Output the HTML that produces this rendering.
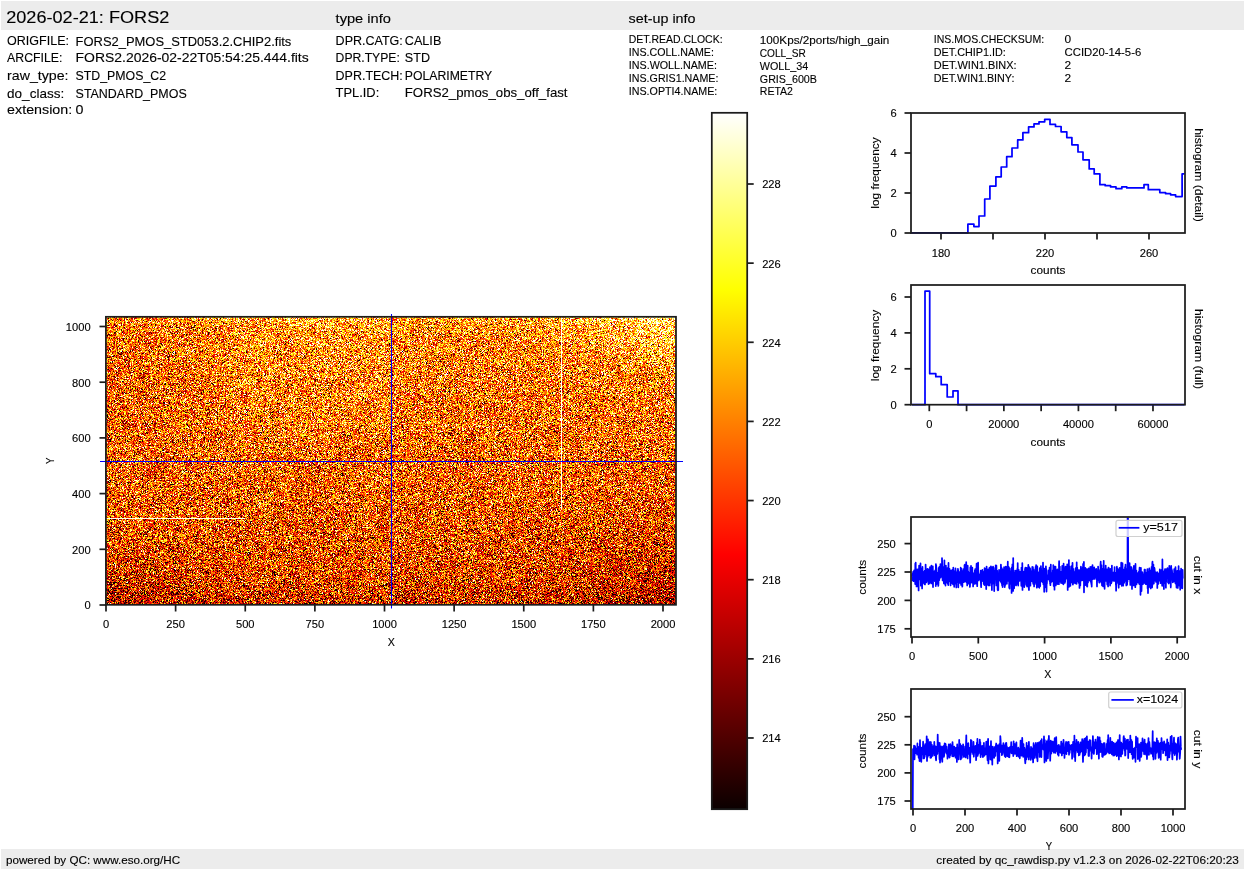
<!DOCTYPE html>
<html><head><meta charset="utf-8"><title>FORS2 raw display</title>
<style>
html,body{margin:0;padding:0;background:#fff;}
body{width:1245px;height:870px;position:relative;overflow:hidden;font-family:"Liberation Sans",sans-serif;}
#img{position:absolute;left:106px;top:317px;width:570px;height:288px;
background:linear-gradient(to bottom, rgb(242,160,53) 0%, rgb(237,140,39) 10%, rgb(231,125,31) 24%, rgb(228,118,28) 38%, rgb(219,104,22) 52%, rgb(217,99,19) 66%, rgb(209,87,14) 80%, rgb(201,75,11) 91%, rgb(186,60,8) 100%);}
#cbar{position:absolute;left:712px;top:113px;width:35px;height:696px;
background:linear-gradient(to top, rgb(11,0,0) 0%, rgb(255,0,0) 36.5079%, rgb(255,255,0) 74.6032%, rgb(255,255,255) 100%);}
svg{position:absolute;left:0;top:0;}
text{font-family:"Liberation Sans",sans-serif;fill:#000;stroke:#000;stroke-width:0.12px;}
</style></head><body>
<canvas id="img" width="570" height="288"></canvas>
<div id="cbar"></div>
<svg width="1245" height="870" viewBox="0 0 1245 870">
<line x1="100" y1="461.5" x2="683" y2="461.5" stroke="#0000ff" stroke-width="1.05"/>
<line x1="391.5" y1="314" x2="391.5" y2="608.5" stroke="#0000ff" stroke-width="1.05"/>
<rect x="105.9" y="316.8" width="570.1" height="288" fill="none" stroke="#1c1c1c" stroke-width="1.74"/>
<rect x="711.8" y="112.8" width="35.40000000000009" height="696.4000000000001" fill="none" stroke="#1c1c1c" stroke-width="1.74"/>
<rect x="1.00" y="1.00" width="1243.00" height="29.00" fill="#ececec" stroke="none" stroke-width="0"/>
<rect x="1.00" y="849.00" width="1243.00" height="20.00" fill="#ececec" stroke="none" stroke-width="0"/>
<text x="6.20" y="23.00" font-size="17.0" text-anchor="start" textLength="163.12" lengthAdjust="spacingAndGlyphs">2026-02-21: FORS2</text>
<text x="335.60" y="22.80" font-size="12.8" text-anchor="start" textLength="55.33" lengthAdjust="spacingAndGlyphs">type info</text>
<text x="628.60" y="22.50" font-size="12.8" text-anchor="start" textLength="66.89" lengthAdjust="spacingAndGlyphs">set-up info</text>
<text x="7.10" y="45.30" font-size="12.8" text-anchor="start" textLength="61.86" lengthAdjust="spacingAndGlyphs">ORIGFILE:</text>
<text x="75.60" y="46.10" font-size="12.8" text-anchor="start" textLength="215.73" lengthAdjust="spacingAndGlyphs">FORS2_PMOS_STD053.2.CHIP2.fits</text>
<text x="7.10" y="61.60" font-size="12.8" text-anchor="start" textLength="55.30" lengthAdjust="spacingAndGlyphs">ARCFILE:</text>
<text x="75.60" y="61.60" font-size="12.8" text-anchor="start" textLength="233.12" lengthAdjust="spacingAndGlyphs">FORS2.2026-02-22T05:54:25.444.fits</text>
<text x="7.10" y="79.60" font-size="12.8" text-anchor="start" textLength="61.41" lengthAdjust="spacingAndGlyphs">raw_type:</text>
<text x="75.60" y="80.10" font-size="12.8" text-anchor="start" textLength="90.48" lengthAdjust="spacingAndGlyphs">STD_PMOS_C2</text>
<text x="7.10" y="97.50" font-size="12.8" text-anchor="start" textLength="57.08" lengthAdjust="spacingAndGlyphs">do_class:</text>
<text x="75.60" y="97.50" font-size="12.8" text-anchor="start" textLength="111.11" lengthAdjust="spacingAndGlyphs">STANDARD_PMOS</text>
<text x="7.10" y="113.60" font-size="12.8" text-anchor="start" textLength="65.14" lengthAdjust="spacingAndGlyphs">extension:</text>
<text x="75.60" y="113.60" font-size="12.8" text-anchor="start" textLength="7.95" lengthAdjust="spacingAndGlyphs">0</text>
<text x="335.60" y="44.70" font-size="12.8" text-anchor="start" textLength="67.22" lengthAdjust="spacingAndGlyphs">DPR.CATG:</text>
<text x="404.80" y="44.70" font-size="12.8" text-anchor="start" textLength="36.52" lengthAdjust="spacingAndGlyphs">CALIB</text>
<text x="335.60" y="61.80" font-size="12.8" text-anchor="start" textLength="64.28" lengthAdjust="spacingAndGlyphs">DPR.TYPE:</text>
<text x="404.80" y="61.80" font-size="12.8" text-anchor="start" textLength="25.20" lengthAdjust="spacingAndGlyphs">STD</text>
<text x="335.60" y="79.60" font-size="12.8" text-anchor="start" textLength="67.25" lengthAdjust="spacingAndGlyphs">DPR.TECH:</text>
<text x="404.80" y="79.60" font-size="12.8" text-anchor="start" textLength="87.39" lengthAdjust="spacingAndGlyphs">POLARIMETRY</text>
<text x="335.60" y="96.90" font-size="12.8" text-anchor="start" textLength="43.64" lengthAdjust="spacingAndGlyphs">TPL.ID:</text>
<text x="404.80" y="96.90" font-size="12.8" text-anchor="start" textLength="162.70" lengthAdjust="spacingAndGlyphs">FORS2_pmos_obs_off_fast</text>
<text x="628.80" y="42.80" font-size="10.7" text-anchor="start" textLength="93.77" lengthAdjust="spacingAndGlyphs">DET.READ.CLOCK:</text>
<text x="759.80" y="44.40" font-size="10.7" text-anchor="start" textLength="129.47" lengthAdjust="spacingAndGlyphs">100Kps/2ports/high_gain</text>
<text x="628.80" y="55.60" font-size="10.7" text-anchor="start" textLength="85.09" lengthAdjust="spacingAndGlyphs">INS.COLL.NAME:</text>
<text x="759.80" y="56.70" font-size="10.7" text-anchor="start" textLength="46.09" lengthAdjust="spacingAndGlyphs">COLL_SR</text>
<text x="628.80" y="68.70" font-size="10.7" text-anchor="start" textLength="88.12" lengthAdjust="spacingAndGlyphs">INS.WOLL.NAME:</text>
<text x="759.80" y="69.80" font-size="10.7" text-anchor="start" textLength="48.53" lengthAdjust="spacingAndGlyphs">WOLL_34</text>
<text x="628.80" y="81.50" font-size="10.7" text-anchor="start" textLength="89.64" lengthAdjust="spacingAndGlyphs">INS.GRIS1.NAME:</text>
<text x="759.80" y="82.60" font-size="10.7" text-anchor="start" textLength="57.19" lengthAdjust="spacingAndGlyphs">GRIS_600B</text>
<text x="628.80" y="94.50" font-size="10.7" text-anchor="start" textLength="88.56" lengthAdjust="spacingAndGlyphs">INS.OPTI4.NAME:</text>
<text x="759.80" y="94.50" font-size="10.7" text-anchor="start" textLength="33.11" lengthAdjust="spacingAndGlyphs">RETA2</text>
<text x="933.80" y="42.70" font-size="10.7" text-anchor="start" textLength="110.33" lengthAdjust="spacingAndGlyphs">INS.MOS.CHECKSUM:</text>
<text x="1064.60" y="42.70" font-size="10.7" text-anchor="start" textLength="6.62" lengthAdjust="spacingAndGlyphs">0</text>
<text x="933.80" y="55.80" font-size="10.7" text-anchor="start" textLength="71.98" lengthAdjust="spacingAndGlyphs">DET.CHIP1.ID:</text>
<text x="1064.60" y="55.80" font-size="10.7" text-anchor="start" textLength="76.61" lengthAdjust="spacingAndGlyphs">CCID20-14-5-6</text>
<text x="933.80" y="68.80" font-size="10.7" text-anchor="start" textLength="82.72" lengthAdjust="spacingAndGlyphs">DET.WIN1.BINX:</text>
<text x="1064.60" y="68.80" font-size="10.7" text-anchor="start" textLength="6.62" lengthAdjust="spacingAndGlyphs">2</text>
<text x="933.80" y="81.50" font-size="10.7" text-anchor="start" textLength="80.58" lengthAdjust="spacingAndGlyphs">DET.WIN1.BINY:</text>
<text x="1064.60" y="81.50" font-size="10.7" text-anchor="start" textLength="6.62" lengthAdjust="spacingAndGlyphs">2</text>
<text x="6.00" y="863.60" font-size="10.7" text-anchor="start" textLength="174.06" lengthAdjust="spacingAndGlyphs">powered by QC: www.eso.org/HC</text>
<text x="1238.80" y="863.60" font-size="10.7" text-anchor="end" textLength="302.50" lengthAdjust="spacingAndGlyphs">created by qc_rawdisp.py v1.2.3 on 2026-02-22T06:20:23</text>
<line x1="106.00" y1="605.00" x2="106.00" y2="611.50" stroke="#1c1c1c" stroke-width="1.7"/>
<text x="106.00" y="628.20" font-size="10" text-anchor="middle" textLength="6.19" lengthAdjust="spacingAndGlyphs">0</text>
<line x1="175.62" y1="605.00" x2="175.62" y2="611.50" stroke="#1c1c1c" stroke-width="1.7"/>
<text x="175.62" y="628.20" font-size="10" text-anchor="middle" textLength="18.56" lengthAdjust="spacingAndGlyphs">250</text>
<line x1="245.25" y1="605.00" x2="245.25" y2="611.50" stroke="#1c1c1c" stroke-width="1.7"/>
<text x="245.25" y="628.20" font-size="10" text-anchor="middle" textLength="18.56" lengthAdjust="spacingAndGlyphs">500</text>
<line x1="314.88" y1="605.00" x2="314.88" y2="611.50" stroke="#1c1c1c" stroke-width="1.7"/>
<text x="314.88" y="628.20" font-size="10" text-anchor="middle" textLength="18.56" lengthAdjust="spacingAndGlyphs">750</text>
<line x1="384.50" y1="605.00" x2="384.50" y2="611.50" stroke="#1c1c1c" stroke-width="1.7"/>
<text x="384.50" y="628.20" font-size="10" text-anchor="middle" textLength="24.75" lengthAdjust="spacingAndGlyphs">1000</text>
<line x1="454.13" y1="605.00" x2="454.13" y2="611.50" stroke="#1c1c1c" stroke-width="1.7"/>
<text x="454.13" y="628.20" font-size="10" text-anchor="middle" textLength="24.75" lengthAdjust="spacingAndGlyphs">1250</text>
<line x1="523.75" y1="605.00" x2="523.75" y2="611.50" stroke="#1c1c1c" stroke-width="1.7"/>
<text x="523.75" y="628.20" font-size="10" text-anchor="middle" textLength="24.75" lengthAdjust="spacingAndGlyphs">1500</text>
<line x1="593.38" y1="605.00" x2="593.38" y2="611.50" stroke="#1c1c1c" stroke-width="1.7"/>
<text x="593.38" y="628.20" font-size="10" text-anchor="middle" textLength="24.75" lengthAdjust="spacingAndGlyphs">1750</text>
<line x1="663.00" y1="605.00" x2="663.00" y2="611.50" stroke="#1c1c1c" stroke-width="1.7"/>
<text x="663.00" y="628.20" font-size="10" text-anchor="middle" textLength="24.75" lengthAdjust="spacingAndGlyphs">2000</text>
<line x1="99.50" y1="605.00" x2="106.00" y2="605.00" stroke="#1c1c1c" stroke-width="1.7"/>
<text x="90.60" y="609.40" font-size="10" text-anchor="end" textLength="6.19" lengthAdjust="spacingAndGlyphs">0</text>
<line x1="99.50" y1="549.30" x2="106.00" y2="549.30" stroke="#1c1c1c" stroke-width="1.7"/>
<text x="90.60" y="553.70" font-size="10" text-anchor="end" textLength="18.56" lengthAdjust="spacingAndGlyphs">200</text>
<line x1="99.50" y1="493.60" x2="106.00" y2="493.60" stroke="#1c1c1c" stroke-width="1.7"/>
<text x="90.60" y="498.00" font-size="10" text-anchor="end" textLength="18.56" lengthAdjust="spacingAndGlyphs">400</text>
<line x1="99.50" y1="437.90" x2="106.00" y2="437.90" stroke="#1c1c1c" stroke-width="1.7"/>
<text x="90.60" y="442.30" font-size="10" text-anchor="end" textLength="18.56" lengthAdjust="spacingAndGlyphs">600</text>
<line x1="99.50" y1="382.20" x2="106.00" y2="382.20" stroke="#1c1c1c" stroke-width="1.7"/>
<text x="90.60" y="386.60" font-size="10" text-anchor="end" textLength="18.56" lengthAdjust="spacingAndGlyphs">800</text>
<line x1="99.50" y1="326.50" x2="106.00" y2="326.50" stroke="#1c1c1c" stroke-width="1.7"/>
<text x="90.60" y="330.90" font-size="10" text-anchor="end" textLength="24.75" lengthAdjust="spacingAndGlyphs">1000</text>
<text x="391.40" y="645.60" font-size="10.7" text-anchor="middle" textLength="7.12" lengthAdjust="spacingAndGlyphs">X</text>
<text x="54.00" y="460.80" font-size="10.7" text-anchor="middle" textLength="6.36" lengthAdjust="spacingAndGlyphs" transform="rotate(-90 54.00 460.80)">Y</text>
<line x1="747.20" y1="737.98" x2="753.70" y2="737.98" stroke="#1c1c1c" stroke-width="1.74"/>
<text x="762.20" y="742.38" font-size="10" text-anchor="start" textLength="18.56" lengthAdjust="spacingAndGlyphs">214</text>
<line x1="747.20" y1="658.84" x2="753.70" y2="658.84" stroke="#1c1c1c" stroke-width="1.74"/>
<text x="762.20" y="663.24" font-size="10" text-anchor="start" textLength="18.56" lengthAdjust="spacingAndGlyphs">216</text>
<line x1="747.20" y1="579.70" x2="753.70" y2="579.70" stroke="#1c1c1c" stroke-width="1.74"/>
<text x="762.20" y="584.10" font-size="10" text-anchor="start" textLength="18.56" lengthAdjust="spacingAndGlyphs">218</text>
<line x1="747.20" y1="500.56" x2="753.70" y2="500.56" stroke="#1c1c1c" stroke-width="1.74"/>
<text x="762.20" y="504.96" font-size="10" text-anchor="start" textLength="18.56" lengthAdjust="spacingAndGlyphs">220</text>
<line x1="747.20" y1="421.42" x2="753.70" y2="421.42" stroke="#1c1c1c" stroke-width="1.74"/>
<text x="762.20" y="425.82" font-size="10" text-anchor="start" textLength="18.56" lengthAdjust="spacingAndGlyphs">222</text>
<line x1="747.20" y1="342.28" x2="753.70" y2="342.28" stroke="#1c1c1c" stroke-width="1.74"/>
<text x="762.20" y="346.68" font-size="10" text-anchor="start" textLength="18.56" lengthAdjust="spacingAndGlyphs">224</text>
<line x1="747.20" y1="263.14" x2="753.70" y2="263.14" stroke="#1c1c1c" stroke-width="1.74"/>
<text x="762.20" y="267.54" font-size="10" text-anchor="start" textLength="18.56" lengthAdjust="spacingAndGlyphs">226</text>
<line x1="747.20" y1="184.00" x2="753.70" y2="184.00" stroke="#1c1c1c" stroke-width="1.74"/>
<text x="762.20" y="188.40" font-size="10" text-anchor="start" textLength="18.56" lengthAdjust="spacingAndGlyphs">228</text>
<line x1="904.50" y1="233.00" x2="911.00" y2="233.00" stroke="#1c1c1c" stroke-width="1.74"/>
<text x="896.80" y="237.40" font-size="10" text-anchor="end" textLength="6.19" lengthAdjust="spacingAndGlyphs">0</text>
<line x1="904.50" y1="193.00" x2="911.00" y2="193.00" stroke="#1c1c1c" stroke-width="1.74"/>
<text x="896.80" y="197.40" font-size="10" text-anchor="end" textLength="6.19" lengthAdjust="spacingAndGlyphs">2</text>
<line x1="904.50" y1="153.00" x2="911.00" y2="153.00" stroke="#1c1c1c" stroke-width="1.74"/>
<text x="896.80" y="157.40" font-size="10" text-anchor="end" textLength="6.19" lengthAdjust="spacingAndGlyphs">4</text>
<line x1="904.50" y1="113.00" x2="911.00" y2="113.00" stroke="#1c1c1c" stroke-width="1.74"/>
<text x="896.80" y="117.40" font-size="10" text-anchor="end" textLength="6.19" lengthAdjust="spacingAndGlyphs">6</text>
<line x1="941.00" y1="233.00" x2="941.00" y2="239.50" stroke="#1c1c1c" stroke-width="1.74"/>
<text x="941.00" y="257.00" font-size="10" text-anchor="middle" textLength="18.56" lengthAdjust="spacingAndGlyphs">180</text>
<line x1="993.00" y1="233.00" x2="993.00" y2="239.50" stroke="#1c1c1c" stroke-width="1.74"/>
<line x1="1045.00" y1="233.00" x2="1045.00" y2="239.50" stroke="#1c1c1c" stroke-width="1.74"/>
<text x="1045.00" y="257.00" font-size="10" text-anchor="middle" textLength="18.56" lengthAdjust="spacingAndGlyphs">220</text>
<line x1="1097.00" y1="233.00" x2="1097.00" y2="239.50" stroke="#1c1c1c" stroke-width="1.74"/>
<line x1="1149.00" y1="233.00" x2="1149.00" y2="239.50" stroke="#1c1c1c" stroke-width="1.74"/>
<text x="1149.00" y="257.00" font-size="10" text-anchor="middle" textLength="18.56" lengthAdjust="spacingAndGlyphs">260</text>
<text x="1048.00" y="273.90" font-size="10.7" text-anchor="middle" textLength="34.77" lengthAdjust="spacingAndGlyphs">counts</text>
<text x="878.60" y="173.00" font-size="10.7" text-anchor="middle" textLength="71.36" lengthAdjust="spacingAndGlyphs" transform="rotate(-90 878.60 173.00)">log frequency</text>
<text x="1194.60" y="175.00" font-size="10.7" text-anchor="middle" textLength="93.44" lengthAdjust="spacingAndGlyphs" transform="rotate(90 1194.60 175.00)">histogram (detail)</text>
<path d="M911,232.8 H967.9 V224.2 H973.9 V226.6 H979 V216 H984.7 V199 H989.9 V186.1 H995.9 V176.8 H1001.2 V167 H1006.7 V156.7 H1012 V148 H1017.7 V139.9 H1022.9 V132.7 H1028.6 V126.9 H1034 V123.9 H1039 V121.8 H1044.7 V119.3 H1050 V124.4 H1055.5 V126.5 H1061.1 V131.8 H1066.8 V137.6 H1071.9 V144.8 H1078 V152 H1083 V159.8 H1089.2 V168.9 H1094.2 V173.9 H1099.9 V184.7 H1105.2 V185.7 H1110.6 V186.9 H1116 V188.7 H1121.8 V186.9 H1126.8 V187.9 H1144 V184.7 H1148.3 V189.7 H1159.8 V192.6 H1165.6 V193.7 H1170.6 V194.8 H1175.6 V196.6 H1182.1 V173.9 H1184.5" fill="none" stroke="#00f" stroke-width="1.74" stroke-linejoin="round"/>
<rect x="911.00" y="113.00" width="274.00" height="120.00" fill="none" stroke="#1c1c1c" stroke-width="1.74"/>
<line x1="904.50" y1="404.70" x2="911.00" y2="404.70" stroke="#1c1c1c" stroke-width="1.74"/>
<text x="896.80" y="409.10" font-size="10" text-anchor="end" textLength="6.19" lengthAdjust="spacingAndGlyphs">0</text>
<line x1="904.50" y1="368.80" x2="911.00" y2="368.80" stroke="#1c1c1c" stroke-width="1.74"/>
<text x="896.80" y="373.20" font-size="10" text-anchor="end" textLength="6.19" lengthAdjust="spacingAndGlyphs">2</text>
<line x1="904.50" y1="332.90" x2="911.00" y2="332.90" stroke="#1c1c1c" stroke-width="1.74"/>
<text x="896.80" y="337.30" font-size="10" text-anchor="end" textLength="6.19" lengthAdjust="spacingAndGlyphs">4</text>
<line x1="904.50" y1="297.00" x2="911.00" y2="297.00" stroke="#1c1c1c" stroke-width="1.74"/>
<text x="896.80" y="301.40" font-size="10" text-anchor="end" textLength="6.19" lengthAdjust="spacingAndGlyphs">6</text>
<line x1="929.30" y1="404.70" x2="929.30" y2="411.20" stroke="#1c1c1c" stroke-width="1.74"/>
<text x="929.30" y="428.00" font-size="10" text-anchor="middle" textLength="6.19" lengthAdjust="spacingAndGlyphs">0</text>
<line x1="966.58" y1="404.70" x2="966.58" y2="411.20" stroke="#1c1c1c" stroke-width="1.74"/>
<line x1="1003.86" y1="404.70" x2="1003.86" y2="411.20" stroke="#1c1c1c" stroke-width="1.74"/>
<text x="1003.86" y="428.00" font-size="10" text-anchor="middle" textLength="30.94" lengthAdjust="spacingAndGlyphs">20000</text>
<line x1="1041.14" y1="404.70" x2="1041.14" y2="411.20" stroke="#1c1c1c" stroke-width="1.74"/>
<line x1="1078.42" y1="404.70" x2="1078.42" y2="411.20" stroke="#1c1c1c" stroke-width="1.74"/>
<text x="1078.42" y="428.00" font-size="10" text-anchor="middle" textLength="30.94" lengthAdjust="spacingAndGlyphs">40000</text>
<line x1="1115.70" y1="404.70" x2="1115.70" y2="411.20" stroke="#1c1c1c" stroke-width="1.74"/>
<line x1="1152.98" y1="404.70" x2="1152.98" y2="411.20" stroke="#1c1c1c" stroke-width="1.74"/>
<text x="1152.98" y="428.00" font-size="10" text-anchor="middle" textLength="30.94" lengthAdjust="spacingAndGlyphs">60000</text>
<text x="1048.00" y="445.80" font-size="10.7" text-anchor="middle" textLength="34.77" lengthAdjust="spacingAndGlyphs">counts</text>
<text x="878.60" y="345.50" font-size="10.7" text-anchor="middle" textLength="71.36" lengthAdjust="spacingAndGlyphs" transform="rotate(-90 878.60 345.50)">log frequency</text>
<text x="1194.60" y="349.00" font-size="10.7" text-anchor="middle" textLength="80.22" lengthAdjust="spacingAndGlyphs" transform="rotate(90 1194.60 349.00)">histogram (full)</text>
<path d="M912,404.7 H925 V291.2 H929.7 V373.7 H935.8 V376.7 H941.2 V384.7 H947.2 V397 H953 V390.8 H958 V404.7 H1184.5" fill="none" stroke="#00f" stroke-width="1.74" stroke-linejoin="round"/>
<rect x="911.00" y="285.00" width="274.00" height="119.70" fill="none" stroke="#1c1c1c" stroke-width="1.74"/>
<line x1="904.50" y1="628.80" x2="911.00" y2="628.80" stroke="#1c1c1c" stroke-width="1.74"/>
<text x="895.80" y="633.20" font-size="10" text-anchor="end" textLength="18.56" lengthAdjust="spacingAndGlyphs">175</text>
<line x1="904.50" y1="600.40" x2="911.00" y2="600.40" stroke="#1c1c1c" stroke-width="1.74"/>
<text x="895.80" y="604.80" font-size="10" text-anchor="end" textLength="18.56" lengthAdjust="spacingAndGlyphs">200</text>
<line x1="904.50" y1="572.00" x2="911.00" y2="572.00" stroke="#1c1c1c" stroke-width="1.74"/>
<text x="895.80" y="576.40" font-size="10" text-anchor="end" textLength="18.56" lengthAdjust="spacingAndGlyphs">225</text>
<line x1="904.50" y1="543.60" x2="911.00" y2="543.60" stroke="#1c1c1c" stroke-width="1.74"/>
<text x="895.80" y="548.00" font-size="10" text-anchor="end" textLength="18.56" lengthAdjust="spacingAndGlyphs">250</text>
<line x1="912.00" y1="637.00" x2="912.00" y2="643.50" stroke="#1c1c1c" stroke-width="1.74"/>
<text x="912.00" y="660.20" font-size="10" text-anchor="middle" textLength="6.19" lengthAdjust="spacingAndGlyphs">0</text>
<line x1="978.30" y1="637.00" x2="978.30" y2="643.50" stroke="#1c1c1c" stroke-width="1.74"/>
<text x="978.30" y="660.20" font-size="10" text-anchor="middle" textLength="18.56" lengthAdjust="spacingAndGlyphs">500</text>
<line x1="1044.60" y1="637.00" x2="1044.60" y2="643.50" stroke="#1c1c1c" stroke-width="1.74"/>
<text x="1044.60" y="660.20" font-size="10" text-anchor="middle" textLength="24.75" lengthAdjust="spacingAndGlyphs">1000</text>
<line x1="1110.90" y1="637.00" x2="1110.90" y2="643.50" stroke="#1c1c1c" stroke-width="1.74"/>
<text x="1110.90" y="660.20" font-size="10" text-anchor="middle" textLength="24.75" lengthAdjust="spacingAndGlyphs">1500</text>
<line x1="1177.20" y1="637.00" x2="1177.20" y2="643.50" stroke="#1c1c1c" stroke-width="1.74"/>
<text x="1177.20" y="660.20" font-size="10" text-anchor="middle" textLength="24.75" lengthAdjust="spacingAndGlyphs">2000</text>
<text x="1047.70" y="678.00" font-size="10.7" text-anchor="middle" textLength="7.12" lengthAdjust="spacingAndGlyphs">X</text>
<text x="866.40" y="577.30" font-size="10.7" text-anchor="middle" textLength="34.77" lengthAdjust="spacingAndGlyphs" transform="rotate(-90 866.40 577.30)">counts</text>
<text x="1194.40" y="575.00" font-size="10.7" text-anchor="middle" textLength="38.66" lengthAdjust="spacingAndGlyphs" transform="rotate(90 1194.40 575.00)">cut in x</text>
<clipPath id="c1"><rect x="911" y="517" width="274" height="120"/></clipPath>
<path d="M912.0,576.9 912.1,575.8 912.3,574.0 912.4,580.5 912.5,578.7 912.7,573.5 912.8,579.3 912.9,577.6 913.1,571.9 913.2,571.9 913.3,579.5 913.5,577.5 913.6,581.2 913.7,577.9 913.9,573.8 914.0,576.9 914.1,570.4 914.2,577.0 914.4,579.4 914.5,576.3 914.6,576.9 914.8,579.8 914.9,576.9 915.0,575.2 915.2,584.1 915.3,563.6 915.4,566.9 915.6,577.4 915.7,562.7 915.8,575.9 916.0,569.5 916.1,583.3 916.2,575.1 916.4,573.9 916.5,586.4 916.6,570.2 916.8,584.4 916.9,580.6 917.0,575.4 917.2,569.3 917.3,578.9 917.4,586.5 917.6,574.8 917.7,580.1 917.8,573.4 918.0,579.0 918.1,573.9 918.2,583.1 918.4,573.2 918.5,569.2 918.6,590.4 918.7,577.8 918.9,572.9 919.0,575.3 919.1,565.5 919.3,577.3 919.4,573.8 919.5,572.9 919.7,579.4 919.8,577.0 919.9,577.0 920.1,574.6 920.2,576.8 920.3,578.4 920.5,563.4 920.6,576.6 920.7,573.8 920.9,585.7 921.0,582.0 921.1,569.9 921.3,575.7 921.4,582.7 921.5,568.8 921.7,573.2 921.8,579.8 921.9,569.3 922.1,588.5 922.2,569.5 922.3,573.3 922.5,566.9 922.6,578.5 922.7,583.1 922.8,573.2 923.0,574.6 923.1,572.2 923.2,577.0 923.4,573.8 923.5,572.2 923.6,582.9 923.8,577.8 923.9,575.7 924.0,576.2 924.2,579.8 924.3,576.1 924.4,584.1 924.6,582.6 924.7,570.7 924.8,572.4 925.0,584.5 925.1,570.6 925.2,570.5 925.4,577.9 925.5,575.7 925.6,564.6 925.8,571.2 925.9,575.3 926.0,579.0 926.2,574.0 926.3,579.1 926.4,582.4 926.6,576.2 926.7,570.3 926.8,578.0 926.9,580.9 927.1,570.5 927.2,573.6 927.3,573.5 927.5,568.8 927.6,575.3 927.7,573.3 927.9,572.2 928.0,579.3 928.1,578.1 928.3,569.4 928.4,579.2 928.5,584.1 928.7,574.9 928.8,580.4 928.9,581.0 929.1,573.8 929.2,583.6 929.3,577.0 929.5,577.7 929.6,577.8 929.7,582.4 929.9,569.7 930.0,567.0 930.1,574.1 930.3,578.5 930.4,581.5 930.5,580.4 930.7,574.8 930.8,576.7 930.9,582.7 931.1,576.3 931.2,574.8 931.3,583.4 931.4,565.6 931.6,579.8 931.7,583.3 931.8,574.9 932.0,576.8 932.1,579.1 932.2,578.4 932.4,579.1 932.5,574.0 932.6,583.3 932.8,566.3 932.9,577.9 933.0,587.1 933.2,571.9 933.3,574.0 933.4,575.9 933.6,577.8 933.7,575.3 933.8,574.0 934.0,574.5 934.1,580.0 934.2,577.0 934.4,575.8 934.5,571.0 934.6,571.7 934.8,574.9 934.9,581.2 935.0,576.9 935.2,574.7 935.3,573.6 935.4,574.3 935.5,574.2 935.7,569.1 935.8,586.1 935.9,564.1 936.1,578.6 936.2,565.3 936.3,570.4 936.5,572.4 936.6,584.1 936.7,578.7 936.9,582.0 937.0,572.5 937.1,575.6 937.3,579.4 937.4,583.6 937.5,577.7 937.7,575.5 937.8,579.5 937.9,577.3 938.1,575.6 938.2,582.2 938.3,586.0 938.5,582.5 938.6,567.9 938.7,576.8 938.9,577.1 939.0,577.9 939.1,575.9 939.3,580.1 939.4,566.8 939.5,571.0 939.7,571.0 939.8,573.6 939.9,575.2 940.0,573.8 940.2,577.0 940.3,570.0 940.4,564.2 940.6,577.6 940.7,572.5 940.8,570.7 941.0,572.4 941.1,572.5 941.2,574.8 941.4,574.6 941.5,567.0 941.6,572.2 941.8,569.8 941.9,575.3 942.0,558.1 942.2,563.3 942.3,577.0 942.4,570.4 942.6,580.4 942.7,568.8 942.8,579.6 943.0,571.2 943.1,568.4 943.2,575.6 943.4,577.0 943.5,572.8 943.6,566.8 943.8,575.4 943.9,583.4 944.0,573.0 944.1,573.1 944.3,574.8 944.4,560.3 944.5,575.4 944.7,570.8 944.8,579.3 944.9,584.0 945.1,583.8 945.2,579.3 945.3,567.9 945.5,585.6 945.6,575.1 945.7,575.3 945.9,565.5 946.0,582.6 946.1,580.1 946.3,572.0 946.4,578.6 946.5,581.7 946.7,572.9 946.8,573.4 946.9,578.6 947.1,569.3 947.2,571.8 947.3,568.1 947.5,570.7 947.6,577.3 947.7,583.5 947.9,579.7 948.0,573.8 948.1,583.8 948.3,585.2 948.4,577.1 948.5,562.9 948.6,574.2 948.8,569.2 948.9,581.4 949.0,573.8 949.2,568.6 949.3,570.6 949.4,575.2 949.6,574.6 949.7,569.1 949.8,576.2 950.0,573.7 950.1,575.0 950.2,580.4 950.4,577.2 950.5,576.6 950.6,585.4 950.8,580.1 950.9,575.1 951.0,581.1 951.2,570.8 951.3,570.6 951.4,577.8 951.6,571.8 951.7,574.8 951.8,570.7 952.0,578.6 952.1,581.4 952.2,581.8 952.4,583.5 952.5,573.5 952.6,583.1 952.7,569.5 952.9,576.6 953.0,584.3 953.1,578.1 953.3,567.5 953.4,577.8 953.5,573.3 953.7,577.9 953.8,584.0 953.9,572.0 954.1,577.4 954.2,586.8 954.3,576.7 954.5,571.3 954.6,581.0 954.7,573.2 954.9,571.5 955.0,573.1 955.1,582.0 955.3,583.5 955.4,575.2 955.5,568.4 955.7,576.2 955.8,579.5 955.9,572.9 956.1,575.9 956.2,581.6 956.3,587.5 956.5,579.9 956.6,573.0 956.7,579.7 956.8,579.8 957.0,572.1 957.1,575.2 957.2,581.3 957.4,579.9 957.5,579.4 957.6,571.6 957.8,569.9 957.9,568.8 958.0,582.3 958.2,570.0 958.3,587.3 958.4,581.2 958.6,575.3 958.7,579.1 958.8,577.0 959.0,575.9 959.1,576.1 959.2,580.3 959.4,572.2 959.5,576.8 959.6,582.8 959.8,576.5 959.9,572.6 960.0,583.0 960.2,572.5 960.3,579.6 960.4,573.2 960.6,574.1 960.7,567.7 960.8,573.7 961.0,579.9 961.1,585.0 961.2,575.6 961.3,579.1 961.5,568.5 961.6,572.9 961.7,571.1 961.9,576.2 962.0,583.2 962.1,580.5 962.3,586.6 962.4,585.4 962.5,571.4 962.7,577.0 962.8,576.7 962.9,575.1 963.1,571.8 963.2,572.0 963.3,578.8 963.5,579.4 963.6,569.2 963.7,571.2 963.9,579.3 964.0,582.1 964.1,573.8 964.3,573.3 964.4,577.5 964.5,565.2 964.7,574.6 964.8,577.0 964.9,564.6 965.1,581.1 965.2,575.1 965.3,580.2 965.4,566.1 965.6,578.3 965.7,575.2 965.8,575.0 966.0,581.6 966.1,571.0 966.2,562.2 966.4,574.0 966.5,579.4 966.6,582.3 966.8,578.9 966.9,576.1 967.0,576.3 967.2,585.5 967.3,566.0 967.4,574.8 967.6,584.3 967.7,565.7 967.8,578.3 968.0,572.9 968.1,574.5 968.2,571.4 968.4,573.1 968.5,574.7 968.6,583.3 968.8,575.0 968.9,579.0 969.0,577.3 969.2,573.0 969.3,575.7 969.4,573.7 969.6,578.0 969.7,579.1 969.8,582.8 969.9,587.0 970.1,584.1 970.2,576.5 970.3,567.4 970.5,581.6 970.6,576.8 970.7,579.3 970.9,574.0 971.0,565.9 971.1,568.6 971.3,578.4 971.4,578.9 971.5,575.0 971.7,579.6 971.8,580.2 971.9,582.6 972.1,574.5 972.2,581.8 972.3,567.5 972.5,578.7 972.6,578.9 972.7,575.3 972.9,576.4 973.0,573.2 973.1,586.4 973.3,577.6 973.4,576.6 973.5,584.3 973.7,580.3 973.8,574.2 973.9,573.4 974.0,584.2 974.2,580.0 974.3,582.4 974.4,574.3 974.6,583.5 974.7,576.7 974.8,570.7 975.0,577.9 975.1,571.8 975.2,569.0 975.4,581.5 975.5,580.9 975.6,580.3 975.8,578.9 975.9,576.0 976.0,583.7 976.2,575.0 976.3,580.2 976.4,570.7 976.6,563.7 976.7,576.3 976.8,564.1 977.0,569.8 977.1,573.3 977.2,586.2 977.4,574.9 977.5,579.9 977.6,570.7 977.8,570.2 977.9,575.0 978.0,578.5 978.1,562.5 978.3,575.0 978.4,572.5 978.5,578.6 978.7,573.9 978.8,580.4 978.9,575.7 979.1,577.0 979.2,579.4 979.3,578.8 979.5,577.0 979.6,577.2 979.7,577.8 979.9,578.3 980.0,578.2 980.1,575.5 980.3,578.7 980.4,574.0 980.5,579.2 980.7,570.6 980.8,580.6 980.9,583.0 981.1,587.2 981.2,577.8 981.3,578.9 981.5,574.5 981.6,578.3 981.7,581.1 981.9,571.0 982.0,578.5 982.1,571.0 982.3,575.8 982.4,569.9 982.5,577.8 982.6,573.8 982.8,581.1 982.9,578.0 983.0,577.6 983.2,575.4 983.3,573.7 983.4,580.3 983.6,573.3 983.7,583.9 983.8,579.1 984.0,575.9 984.1,571.7 984.2,573.3 984.4,575.8 984.5,585.1 984.6,568.0 984.8,574.0 984.9,570.8 985.0,568.7 985.2,575.6 985.3,580.7 985.4,573.8 985.6,579.7 985.7,573.3 985.8,579.2 986.0,574.2 986.1,579.3 986.2,589.1 986.4,571.7 986.5,579.2 986.6,566.5 986.7,575.5 986.9,583.1 987.0,574.5 987.1,582.0 987.3,584.8 987.4,582.2 987.5,576.9 987.7,575.1 987.8,575.0 987.9,574.5 988.1,573.4 988.2,569.4 988.3,578.9 988.5,571.3 988.6,575.4 988.7,585.4 988.9,570.5 989.0,582.3 989.1,572.5 989.3,576.6 989.4,571.2 989.5,567.5 989.7,571.4 989.8,585.4 989.9,575.6 990.1,578.4 990.2,577.3 990.3,576.8 990.5,571.2 990.6,575.1 990.7,581.3 990.9,566.3 991.0,578.4 991.1,578.7 991.2,582.7 991.4,578.0 991.5,581.0 991.6,567.2 991.8,569.5 991.9,590.1 992.0,572.6 992.2,577.0 992.3,583.6 992.4,584.0 992.6,572.4 992.7,575.9 992.8,570.9 993.0,580.6 993.1,566.7 993.2,573.8 993.4,577.0 993.5,571.0 993.6,575.4 993.8,578.7 993.9,581.8 994.0,575.3 994.2,591.1 994.3,580.4 994.4,583.5 994.6,571.5 994.7,570.3 994.8,578.8 995.0,578.9 995.1,567.8 995.2,574.8 995.3,568.0 995.5,576.5 995.6,572.7 995.7,565.3 995.9,578.3 996.0,571.5 996.1,572.3 996.3,585.5 996.4,565.5 996.5,581.2 996.7,572.1 996.8,576.1 996.9,579.8 997.1,578.3 997.2,570.7 997.3,583.7 997.5,575.7 997.6,589.8 997.7,580.0 997.9,590.3 998.0,579.2 998.1,575.6 998.3,590.0 998.4,577.6 998.5,580.0 998.7,579.5 998.8,573.7 998.9,574.4 999.1,569.8 999.2,570.0 999.3,579.1 999.5,570.9 999.6,571.2 999.7,577.0 999.8,579.2 1000.0,580.5 1000.1,580.7 1000.2,572.3 1000.4,578.9 1000.5,575.2 1000.6,580.8 1000.8,581.8 1000.9,564.5 1001.0,566.3 1001.2,571.7 1001.3,576.6 1001.4,581.5 1001.6,567.9 1001.7,583.5 1001.8,576.5 1002.0,575.3 1002.1,585.6 1002.2,576.8 1002.4,569.7 1002.5,571.8 1002.6,587.1 1002.8,569.4 1002.9,583.8 1003.0,576.9 1003.2,577.3 1003.3,582.1 1003.4,569.5 1003.6,576.1 1003.7,574.2 1003.8,584.3 1003.9,581.6 1004.1,567.0 1004.2,576.4 1004.3,577.6 1004.5,575.7 1004.6,581.3 1004.7,587.1 1004.9,583.5 1005.0,577.0 1005.1,572.0 1005.3,573.5 1005.4,584.8 1005.5,581.8 1005.7,581.0 1005.8,566.6 1005.9,582.3 1006.1,580.0 1006.2,573.5 1006.3,567.9 1006.5,572.3 1006.6,571.7 1006.7,567.6 1006.9,583.7 1007.0,572.7 1007.1,577.5 1007.3,570.9 1007.4,579.8 1007.5,570.0 1007.7,565.8 1007.8,561.7 1007.9,580.9 1008.0,578.8 1008.2,573.1 1008.3,568.2 1008.4,580.3 1008.6,568.0 1008.7,580.3 1008.8,567.1 1009.0,577.1 1009.1,570.7 1009.2,587.8 1009.4,587.7 1009.5,570.8 1009.6,588.6 1009.8,568.7 1009.9,584.0 1010.0,578.3 1010.2,571.0 1010.3,575.9 1010.4,576.3 1010.6,575.3 1010.7,577.9 1010.8,572.2 1011.0,572.8 1011.1,573.4 1011.2,573.7 1011.4,579.2 1011.5,581.7 1011.6,593.0 1011.8,567.3 1011.9,575.7 1012.0,573.8 1012.2,573.5 1012.3,580.7 1012.4,564.3 1012.5,574.4 1012.7,578.0 1012.8,575.6 1012.9,578.5 1013.1,591.0 1013.2,558.0 1013.3,574.2 1013.5,578.1 1013.6,581.6 1013.7,578.6 1013.9,581.3 1014.0,586.2 1014.1,588.5 1014.3,580.9 1014.4,573.5 1014.5,578.3 1014.7,572.7 1014.8,574.9 1014.9,584.9 1015.1,576.6 1015.2,570.6 1015.3,583.5 1015.5,580.6 1015.6,582.6 1015.7,579.5 1015.9,580.9 1016.0,581.8 1016.1,585.4 1016.3,570.6 1016.4,583.3 1016.5,577.2 1016.6,578.2 1016.8,579.2 1016.9,570.7 1017.0,577.5 1017.2,572.7 1017.3,583.8 1017.4,568.6 1017.6,577.6 1017.7,563.0 1017.8,570.3 1018.0,576.0 1018.1,577.9 1018.2,585.6 1018.4,573.4 1018.5,576.0 1018.6,569.6 1018.8,573.0 1018.9,571.5 1019.0,573.0 1019.2,576.7 1019.3,573.6 1019.4,580.5 1019.6,571.9 1019.7,580.8 1019.8,578.7 1020.0,571.6 1020.1,574.1 1020.2,576.4 1020.4,576.7 1020.5,577.3 1020.6,576.4 1020.8,573.7 1020.9,579.0 1021.0,578.6 1021.1,576.7 1021.3,585.8 1021.4,579.2 1021.5,567.6 1021.7,581.3 1021.8,575.6 1021.9,576.6 1022.1,575.6 1022.2,577.9 1022.3,563.1 1022.5,590.0 1022.6,577.8 1022.7,583.8 1022.9,576.5 1023.0,578.6 1023.1,574.6 1023.3,578.0 1023.4,575.9 1023.5,571.7 1023.7,578.4 1023.8,581.5 1023.9,581.3 1024.1,571.8 1024.2,576.0 1024.3,587.1 1024.5,573.6 1024.6,580.0 1024.7,573.8 1024.9,575.4 1025.0,569.2 1025.1,570.0 1025.2,568.0 1025.4,571.4 1025.5,567.5 1025.6,576.1 1025.8,576.1 1025.9,568.0 1026.0,575.7 1026.2,584.5 1026.3,575.2 1026.4,575.7 1026.6,585.4 1026.7,567.9 1026.8,580.5 1027.0,575.2 1027.1,586.6 1027.2,574.3 1027.4,575.4 1027.5,573.4 1027.6,571.0 1027.8,579.1 1027.9,580.8 1028.0,574.5 1028.2,575.8 1028.3,564.9 1028.4,574.8 1028.6,580.3 1028.7,578.2 1028.8,588.8 1029.0,590.1 1029.1,568.3 1029.2,567.1 1029.4,570.4 1029.5,573.6 1029.6,579.7 1029.7,577.0 1029.9,571.7 1030.0,569.4 1030.1,568.4 1030.3,579.4 1030.4,585.7 1030.5,579.0 1030.7,579.6 1030.8,572.5 1030.9,573.9 1031.1,575.9 1031.2,577.3 1031.3,581.1 1031.5,577.2 1031.6,577.4 1031.7,571.2 1031.9,579.1 1032.0,578.1 1032.1,570.2 1032.3,566.9 1032.4,576.1 1032.5,581.6 1032.7,576.1 1032.8,568.7 1032.9,567.1 1033.1,580.3 1033.2,583.8 1033.3,573.4 1033.5,581.9 1033.6,569.3 1033.7,577.5 1033.8,576.4 1034.0,581.5 1034.1,586.4 1034.2,579.5 1034.4,575.9 1034.5,577.4 1034.6,572.7 1034.8,571.2 1034.9,584.0 1035.0,577.6 1035.2,571.6 1035.3,571.9 1035.4,571.8 1035.6,566.8 1035.7,577.6 1035.8,574.2 1036.0,577.1 1036.1,565.0 1036.2,581.9 1036.4,575.1 1036.5,579.0 1036.6,565.5 1036.8,587.7 1036.9,576.6 1037.0,583.0 1037.2,582.6 1037.3,566.5 1037.4,580.3 1037.6,579.1 1037.7,575.3 1037.8,575.7 1037.9,577.6 1038.1,580.7 1038.2,572.9 1038.3,572.6 1038.5,586.9 1038.6,573.6 1038.7,579.1 1038.9,575.7 1039.0,572.2 1039.1,583.7 1039.3,587.8 1039.4,579.7 1039.5,580.9 1039.7,573.1 1039.8,568.0 1039.9,573.2 1040.1,586.2 1040.2,585.8 1040.3,570.3 1040.5,575.9 1040.6,581.6 1040.7,573.9 1040.9,566.2 1041.0,573.4 1041.1,568.4 1041.3,574.0 1041.4,578.5 1041.5,570.7 1041.7,574.2 1041.8,579.5 1041.9,580.7 1042.1,576.5 1042.2,581.7 1042.3,580.7 1042.4,577.5 1042.6,578.4 1042.7,581.8 1042.8,582.4 1043.0,562.6 1043.1,570.0 1043.2,570.2 1043.4,584.3 1043.5,574.7 1043.6,582.7 1043.8,573.4 1043.9,577.9 1044.0,576.8 1044.2,591.8 1044.3,568.6 1044.4,573.0 1044.6,573.1 1044.7,576.7 1044.8,587.5 1045.0,580.6 1045.1,576.5 1045.2,572.3 1045.4,578.2 1045.5,586.1 1045.6,568.5 1045.8,579.2 1045.9,566.3 1046.0,572.7 1046.2,577.8 1046.3,569.1 1046.4,579.1 1046.5,591.6 1046.7,579.2 1046.8,577.2 1046.9,583.4 1047.1,576.7 1047.2,576.2 1047.3,579.9 1047.5,577.9 1047.6,576.8 1047.7,575.0 1047.9,576.3 1048.0,579.6 1048.1,577.1 1048.3,577.1 1048.4,570.5 1048.5,576.3 1048.7,571.8 1048.8,578.6 1048.9,570.0 1049.1,572.5 1049.2,577.3 1049.3,575.4 1049.5,574.7 1049.6,567.6 1049.7,581.2 1049.9,574.6 1050.0,579.0 1050.1,584.1 1050.3,573.2 1050.4,585.2 1050.5,578.0 1050.7,572.0 1050.8,564.7 1050.9,582.7 1051.0,580.5 1051.2,581.5 1051.3,579.4 1051.4,572.8 1051.6,575.9 1051.7,578.5 1051.8,575.9 1052.0,579.3 1052.1,578.3 1052.2,578.5 1052.4,581.5 1052.5,578.6 1052.6,579.9 1052.8,570.3 1052.9,570.3 1053.0,574.4 1053.2,579.7 1053.3,565.1 1053.4,573.6 1053.6,576.0 1053.7,585.9 1053.8,574.7 1054.0,581.9 1054.1,566.4 1054.2,579.3 1054.4,575.7 1054.5,589.7 1054.6,570.1 1054.8,580.2 1054.9,569.1 1055.0,573.6 1055.1,577.3 1055.3,576.2 1055.4,580.3 1055.5,566.5 1055.7,585.5 1055.8,585.5 1055.9,576.1 1056.1,579.8 1056.2,576.6 1056.3,577.9 1056.5,573.0 1056.6,579.7 1056.7,574.5 1056.9,576.5 1057.0,576.3 1057.1,578.8 1057.3,569.4 1057.4,584.1 1057.5,583.5 1057.7,576.8 1057.8,575.2 1057.9,570.9 1058.1,572.8 1058.2,571.6 1058.3,571.0 1058.5,570.1 1058.6,581.5 1058.7,576.0 1058.9,584.2 1059.0,564.7 1059.1,561.2 1059.2,581.3 1059.4,577.7 1059.5,574.4 1059.6,570.3 1059.8,566.6 1059.9,578.1 1060.0,573.6 1060.2,572.3 1060.3,577.3 1060.4,581.7 1060.6,578.4 1060.7,572.7 1060.8,572.0 1061.0,574.5 1061.1,583.1 1061.2,575.6 1061.4,577.0 1061.5,571.5 1061.6,572.4 1061.8,579.9 1061.9,580.8 1062.0,577.9 1062.2,565.9 1062.3,571.3 1062.4,582.8 1062.6,569.9 1062.7,569.3 1062.8,583.4 1063.0,582.0 1063.1,576.9 1063.2,583.5 1063.4,584.3 1063.5,569.0 1063.6,563.7 1063.7,582.5 1063.9,577.5 1064.0,572.5 1064.1,573.2 1064.3,568.2 1064.4,572.1 1064.5,577.1 1064.7,583.0 1064.8,574.0 1064.9,582.4 1065.1,572.6 1065.2,581.4 1065.3,570.7 1065.5,566.6 1065.6,577.5 1065.7,570.4 1065.9,577.6 1066.0,573.9 1066.1,573.1 1066.3,575.1 1066.4,566.5 1066.5,575.0 1066.7,569.0 1066.8,570.9 1066.9,578.8 1067.1,575.2 1067.2,564.4 1067.3,574.1 1067.5,576.5 1067.6,569.4 1067.7,590.0 1067.8,577.7 1068.0,571.1 1068.1,574.8 1068.2,572.5 1068.4,575.5 1068.5,582.3 1068.6,578.2 1068.8,571.2 1068.9,560.1 1069.0,586.8 1069.2,578.1 1069.3,572.1 1069.4,577.4 1069.6,566.3 1069.7,573.1 1069.8,578.2 1070.0,572.2 1070.1,573.1 1070.2,570.9 1070.4,585.8 1070.5,570.6 1070.6,578.0 1070.8,574.5 1070.9,575.7 1071.0,574.3 1071.2,581.4 1071.3,574.0 1071.4,572.1 1071.6,566.0 1071.7,568.8 1071.8,582.3 1072.0,573.3 1072.1,574.1 1072.2,569.6 1072.3,576.5 1072.5,562.8 1072.6,570.2 1072.7,583.0 1072.9,584.7 1073.0,579.8 1073.1,571.6 1073.3,573.5 1073.4,568.8 1073.5,583.0 1073.7,578.4 1073.8,571.1 1073.9,576.1 1074.1,576.0 1074.2,572.8 1074.3,577.3 1074.5,575.1 1074.6,579.6 1074.7,583.0 1074.9,574.2 1075.0,574.4 1075.1,572.0 1075.3,575.9 1075.4,575.8 1075.5,583.5 1075.7,568.2 1075.8,575.1 1075.9,570.3 1076.1,581.6 1076.2,572.0 1076.3,575.8 1076.4,574.5 1076.6,583.8 1076.7,562.4 1076.8,581.7 1077.0,579.2 1077.1,578.7 1077.2,567.5 1077.4,571.5 1077.5,569.9 1077.6,578.3 1077.8,576.2 1077.9,581.4 1078.0,576.2 1078.2,570.0 1078.3,575.8 1078.4,575.4 1078.6,573.6 1078.7,579.0 1078.8,582.9 1079.0,583.1 1079.1,570.6 1079.2,572.3 1079.4,580.0 1079.5,588.0 1079.6,578.2 1079.8,576.8 1079.9,570.0 1080.0,581.6 1080.2,575.7 1080.3,585.5 1080.4,579.9 1080.6,572.1 1080.7,580.4 1080.8,578.2 1080.9,566.7 1081.1,577.5 1081.2,580.6 1081.3,580.2 1081.5,574.7 1081.6,580.0 1081.7,576.8 1081.9,572.2 1082.0,574.3 1082.1,572.1 1082.3,573.7 1082.4,578.5 1082.5,571.9 1082.7,567.5 1082.8,580.3 1082.9,577.1 1083.1,563.9 1083.2,577.2 1083.3,576.1 1083.5,578.5 1083.6,575.7 1083.7,578.4 1083.9,561.9 1084.0,592.3 1084.1,579.5 1084.3,581.0 1084.4,574.4 1084.5,575.7 1084.7,572.0 1084.8,575.2 1084.9,583.7 1085.0,572.0 1085.2,581.2 1085.3,567.8 1085.4,585.1 1085.6,568.7 1085.7,572.4 1085.8,571.5 1086.0,573.8 1086.1,570.6 1086.2,570.4 1086.4,574.5 1086.5,574.5 1086.6,577.0 1086.8,584.7 1086.9,569.2 1087.0,586.4 1087.2,578.7 1087.3,586.6 1087.4,577.7 1087.6,570.1 1087.7,581.7 1087.8,577.8 1088.0,582.5 1088.1,574.7 1088.2,577.8 1088.4,576.4 1088.5,570.4 1088.6,568.4 1088.8,573.6 1088.9,579.1 1089.0,573.0 1089.1,573.5 1089.3,571.8 1089.4,580.4 1089.5,569.6 1089.7,577.1 1089.8,569.0 1089.9,569.8 1090.1,569.8 1090.2,570.2 1090.3,566.8 1090.5,576.4 1090.6,573.9 1090.7,581.7 1090.9,572.4 1091.0,574.7 1091.1,569.9 1091.3,584.0 1091.4,579.6 1091.5,577.9 1091.7,586.6 1091.8,574.7 1091.9,566.7 1092.1,568.4 1092.2,568.2 1092.3,571.9 1092.5,565.1 1092.6,574.9 1092.7,579.1 1092.9,569.6 1093.0,568.1 1093.1,573.9 1093.3,571.4 1093.4,576.3 1093.5,574.5 1093.6,579.0 1093.8,568.0 1093.9,574.3 1094.0,577.4 1094.2,567.3 1094.3,573.4 1094.4,575.0 1094.6,579.0 1094.7,569.9 1094.8,576.0 1095.0,573.3 1095.1,572.1 1095.2,572.7 1095.4,569.6 1095.5,573.5 1095.6,569.4 1095.8,574.9 1095.9,576.9 1096.0,574.7 1096.2,568.8 1096.3,575.2 1096.4,577.1 1096.6,579.7 1096.7,578.4 1096.8,577.2 1097.0,586.4 1097.1,574.0 1097.2,573.8 1097.4,570.3 1097.5,572.5 1097.6,578.8 1097.7,575.7 1097.9,578.4 1098.0,577.7 1098.1,566.5 1098.3,573.0 1098.4,579.7 1098.5,580.5 1098.7,573.5 1098.8,574.4 1098.9,571.5 1099.1,572.3 1099.2,582.5 1099.3,572.1 1099.5,582.3 1099.6,579.4 1099.7,582.7 1099.9,574.7 1100.0,569.8 1100.1,578.5 1100.3,572.8 1100.4,581.3 1100.5,564.5 1100.7,561.7 1100.8,579.7 1100.9,580.6 1101.1,577.5 1101.2,579.4 1101.3,572.6 1101.5,565.2 1101.6,578.9 1101.7,574.6 1101.9,582.9 1102.0,585.4 1102.1,575.3 1102.2,569.3 1102.4,582.0 1102.5,568.9 1102.6,578.7 1102.8,572.1 1102.9,582.8 1103.0,586.2 1103.2,579.4 1103.3,586.5 1103.4,572.6 1103.6,576.9 1103.7,560.8 1103.8,576.6 1104.0,579.9 1104.1,578.1 1104.2,580.5 1104.4,573.7 1104.5,574.5 1104.6,588.8 1104.8,570.6 1104.9,575.6 1105.0,569.1 1105.2,579.4 1105.3,574.9 1105.4,577.8 1105.6,580.8 1105.7,565.6 1105.8,573.1 1106.0,576.1 1106.1,578.0 1106.2,581.0 1106.3,574.7 1106.5,578.9 1106.6,580.3 1106.7,576.7 1106.9,577.9 1107.0,569.3 1107.1,580.7 1107.3,584.6 1107.4,569.9 1107.5,576.5 1107.7,581.1 1107.8,569.4 1107.9,571.9 1108.1,586.4 1108.2,571.0 1108.3,569.9 1108.5,567.5 1108.6,574.1 1108.7,579.4 1108.9,576.5 1109.0,568.4 1109.1,577.6 1109.3,569.8 1109.4,581.8 1109.5,577.4 1109.7,572.9 1109.8,572.9 1109.9,572.4 1110.1,585.6 1110.2,569.2 1110.3,571.0 1110.5,570.5 1110.6,581.6 1110.7,568.9 1110.8,578.0 1111.0,581.8 1111.1,575.1 1111.2,583.4 1111.4,580.4 1111.5,573.0 1111.6,576.4 1111.8,581.7 1111.9,565.5 1112.0,578.1 1112.2,580.7 1112.3,578.1 1112.4,577.0 1112.6,575.3 1112.7,574.9 1112.8,574.5 1113.0,578.7 1113.1,579.7 1113.2,572.6 1113.4,576.9 1113.5,578.3 1113.6,572.7 1113.8,576.0 1113.9,581.0 1114.0,578.4 1114.2,572.1 1114.3,574.1 1114.4,577.1 1114.6,567.1 1114.7,576.5 1114.8,577.3 1114.9,574.8 1115.1,578.5 1115.2,581.0 1115.3,572.7 1115.5,573.5 1115.6,575.7 1115.7,576.6 1115.9,584.9 1116.0,572.6 1116.1,590.7 1116.3,572.5 1116.4,579.3 1116.5,580.8 1116.7,583.2 1116.8,574.8 1116.9,566.7 1117.1,569.8 1117.2,580.3 1117.3,575.3 1117.5,580.7 1117.6,573.4 1117.7,580.4 1117.9,578.6 1118.0,569.3 1118.1,581.1 1118.3,580.3 1118.4,571.5 1118.5,584.5 1118.7,587.8 1118.8,578.1 1118.9,580.8 1119.0,572.9 1119.2,571.3 1119.3,576.8 1119.4,568.7 1119.6,567.9 1119.7,578.1 1119.8,580.8 1120.0,573.2 1120.1,584.2 1120.2,582.9 1120.4,574.2 1120.5,569.5 1120.6,578.4 1120.8,571.4 1120.9,572.5 1121.0,581.0 1121.2,562.7 1121.3,581.5 1121.4,574.0 1121.6,575.3 1121.7,585.8 1121.8,568.7 1122.0,572.1 1122.1,569.4 1122.2,579.2 1122.4,578.4 1122.5,563.2 1122.6,570.2 1122.8,573.6 1122.9,573.9 1123.0,569.4 1123.2,585.7 1123.3,569.4 1123.4,570.5 1123.5,573.4 1123.7,576.9 1123.8,573.6 1123.9,571.6 1124.1,583.0 1124.2,580.4 1124.3,570.6 1124.5,578.1 1124.6,575.6 1124.7,576.9 1124.9,574.9 1125.0,567.2 1125.1,569.8 1125.3,575.3 1125.4,580.9 1125.5,564.5 1125.7,574.9 1125.8,572.3 1125.9,574.4 1126.1,571.9 1126.2,582.2 1126.3,585.4 1126.5,572.5 1126.6,569.7 1126.7,579.9 1126.9,574.3 1127.0,577.2 1127.1,584.8 1127.3,577.3 1127.4,572.5 1127.5,581.5 1127.6,518.0 1127.8,518.0 1127.9,518.0 1128.0,518.0 1128.2,569.3 1128.3,576.6 1128.4,572.6 1128.6,566.8 1128.7,579.1 1128.8,575.3 1129.0,569.7 1129.1,577.8 1129.2,574.3 1129.4,572.9 1129.5,576.6 1129.6,563.2 1129.8,575.6 1129.9,577.6 1130.0,577.7 1130.2,581.0 1130.3,584.9 1130.4,572.6 1130.6,577.5 1130.7,571.7 1130.8,567.1 1131.0,580.4 1131.1,571.6 1131.2,584.4 1131.4,567.0 1131.5,578.6 1131.6,576.3 1131.8,580.9 1131.9,580.0 1132.0,589.0 1132.1,584.4 1132.3,580.1 1132.4,573.3 1132.5,570.5 1132.7,585.2 1132.8,577.9 1132.9,580.3 1133.1,576.7 1133.2,569.7 1133.3,576.8 1133.5,568.2 1133.6,568.8 1133.7,585.5 1133.9,565.8 1134.0,566.8 1134.1,574.4 1134.3,580.1 1134.4,584.3 1134.5,569.7 1134.7,574.7 1134.8,581.0 1134.9,576.3 1135.1,569.6 1135.2,572.1 1135.3,587.2 1135.5,563.9 1135.6,575.6 1135.7,570.6 1135.9,577.9 1136.0,578.8 1136.1,574.8 1136.2,574.2 1136.4,570.5 1136.5,584.4 1136.6,572.8 1136.8,573.1 1136.9,577.2 1137.0,577.9 1137.2,572.8 1137.3,574.8 1137.4,575.5 1137.6,580.4 1137.7,576.3 1137.8,579.6 1138.0,581.9 1138.1,582.6 1138.2,578.5 1138.4,578.9 1138.5,580.4 1138.6,575.3 1138.8,578.5 1138.9,571.6 1139.0,573.1 1139.2,578.2 1139.3,584.1 1139.4,570.2 1139.6,567.6 1139.7,571.5 1139.8,569.7 1140.0,580.6 1140.1,570.6 1140.2,579.0 1140.3,572.8 1140.5,594.8 1140.6,582.4 1140.7,576.0 1140.9,567.8 1141.0,578.8 1141.1,581.9 1141.3,576.4 1141.4,579.3 1141.5,591.1 1141.7,582.5 1141.8,576.3 1141.9,577.8 1142.1,576.3 1142.2,572.1 1142.3,584.4 1142.5,582.3 1142.6,582.5 1142.7,574.0 1142.9,581.9 1143.0,580.0 1143.1,578.0 1143.3,583.9 1143.4,579.1 1143.5,579.7 1143.7,577.6 1143.8,576.5 1143.9,574.6 1144.1,582.8 1144.2,572.6 1144.3,581.3 1144.5,569.5 1144.6,581.0 1144.7,571.9 1144.8,574.1 1145.0,569.5 1145.1,575.4 1145.2,572.3 1145.4,583.5 1145.5,572.7 1145.6,580.3 1145.8,576.6 1145.9,584.2 1146.0,580.0 1146.2,575.5 1146.3,573.4 1146.4,572.7 1146.6,580.0 1146.7,582.3 1146.8,578.7 1147.0,581.1 1147.1,576.6 1147.2,571.1 1147.4,569.0 1147.5,582.0 1147.6,588.2 1147.8,587.3 1147.9,576.0 1148.0,593.1 1148.2,576.5 1148.3,573.8 1148.4,572.0 1148.6,575.5 1148.7,582.1 1148.8,587.1 1148.9,580.8 1149.1,575.7 1149.2,574.2 1149.3,568.4 1149.5,575.3 1149.6,572.2 1149.7,577.6 1149.9,582.2 1150.0,576.4 1150.1,586.8 1150.3,575.8 1150.4,570.5 1150.5,581.2 1150.7,588.4 1150.8,574.1 1150.9,580.7 1151.1,574.5 1151.2,584.5 1151.3,575.1 1151.5,575.3 1151.6,566.9 1151.7,577.6 1151.9,574.8 1152.0,580.0 1152.1,587.4 1152.3,562.7 1152.4,584.9 1152.5,561.6 1152.7,571.7 1152.8,566.5 1152.9,583.2 1153.1,567.7 1153.2,575.8 1153.3,572.2 1153.4,564.6 1153.6,576.5 1153.7,574.3 1153.8,583.6 1154.0,580.8 1154.1,581.9 1154.2,577.4 1154.4,567.9 1154.5,572.4 1154.6,568.7 1154.8,575.8 1154.9,571.1 1155.0,572.6 1155.2,579.9 1155.3,578.3 1155.4,576.1 1155.6,580.6 1155.7,572.4 1155.8,580.4 1156.0,578.6 1156.1,581.9 1156.2,577.3 1156.4,573.9 1156.5,577.6 1156.6,577.4 1156.8,581.9 1156.9,575.1 1157.0,577.3 1157.2,572.0 1157.3,587.9 1157.4,575.3 1157.5,574.9 1157.7,580.9 1157.8,582.8 1157.9,580.7 1158.1,577.6 1158.2,584.0 1158.3,573.3 1158.5,575.0 1158.6,575.1 1158.7,580.5 1158.9,577.9 1159.0,577.0 1159.1,580.3 1159.3,578.5 1159.4,575.3 1159.5,575.9 1159.7,575.7 1159.8,569.4 1159.9,576.2 1160.1,577.6 1160.2,581.3 1160.3,576.4 1160.5,583.1 1160.6,581.7 1160.7,572.5 1160.9,574.0 1161.0,570.5 1161.1,582.4 1161.3,572.7 1161.4,570.1 1161.5,578.4 1161.7,573.7 1161.8,582.0 1161.9,572.3 1162.0,582.7 1162.2,586.0 1162.3,578.7 1162.4,559.4 1162.6,581.7 1162.7,570.1 1162.8,581.1 1163.0,572.4 1163.1,579.8 1163.2,584.8 1163.4,575.1 1163.5,575.7 1163.6,579.1 1163.8,572.1 1163.9,589.1 1164.0,571.6 1164.2,577.5 1164.3,572.3 1164.4,580.8 1164.6,574.1 1164.7,582.1 1164.8,572.5 1165.0,569.0 1165.1,570.0 1165.2,582.6 1165.4,583.3 1165.5,579.5 1165.6,574.9 1165.8,576.7 1165.9,587.7 1166.0,569.1 1166.1,581.9 1166.3,572.9 1166.4,572.8 1166.5,576.8 1166.7,577.7 1166.8,577.4 1166.9,570.7 1167.1,575.8 1167.2,577.5 1167.3,577.4 1167.5,568.2 1167.6,571.3 1167.7,576.1 1167.9,576.8 1168.0,582.5 1168.1,576.4 1168.3,580.5 1168.4,577.0 1168.5,579.4 1168.7,583.1 1168.8,583.5 1168.9,571.9 1169.1,574.4 1169.2,582.0 1169.3,565.9 1169.5,570.9 1169.6,573.7 1169.7,573.7 1169.9,576.3 1170.0,574.1 1170.1,576.8 1170.2,582.2 1170.4,577.9 1170.5,578.1 1170.6,580.5 1170.8,587.4 1170.9,574.2 1171.0,569.9 1171.2,565.9 1171.3,573.3 1171.4,574.2 1171.6,575.1 1171.7,569.2 1171.8,578.6 1172.0,570.3 1172.1,571.7 1172.2,574.4 1172.4,573.3 1172.5,576.1 1172.6,580.2 1172.8,582.3 1172.9,577.5 1173.0,575.9 1173.2,576.1 1173.3,578.8 1173.4,578.0 1173.6,581.7 1173.7,574.4 1173.8,578.1 1174.0,577.2 1174.1,574.9 1174.2,569.0 1174.4,579.2 1174.5,578.0 1174.6,573.3 1174.7,572.1 1174.9,579.6 1175.0,571.7 1175.1,571.7 1175.3,583.1 1175.4,568.3 1175.5,567.2 1175.7,572.6 1175.8,574.7 1175.9,577.5 1176.1,580.1 1176.2,584.5 1176.3,575.6 1176.5,587.6 1176.6,584.2 1176.7,574.5 1176.9,581.4 1177.0,579.4 1177.1,571.5 1177.3,570.9 1177.4,581.4 1177.5,577.1 1177.7,577.7 1177.8,588.0 1177.9,581.7 1178.1,576.5 1178.2,585.5 1178.3,576.7 1178.5,579.6 1178.6,566.2 1178.7,580.9 1178.8,583.7 1179.0,578.0 1179.1,577.4 1179.2,583.1 1179.4,585.3 1179.5,581.6 1179.6,585.7 1179.8,572.4 1179.9,571.2 1180.0,579.0 1180.2,589.7 1180.3,572.9 1180.4,574.3 1180.6,575.9 1180.7,571.9 1180.8,579.7 1181.0,580.9 1181.1,568.7 1181.2,580.1 1181.4,580.3 1181.5,587.8 1181.6,575.3 1181.8,577.2 1181.9,583.5 1182.0,572.4 1182.2,578.2 1182.3,588.3 1182.4,574.3 1182.6,569.8 1182.7,573.3 1182.8,578.4" fill="none" stroke="#00f" stroke-width="1.74" clip-path="url(#c1)" stroke-linejoin="round"/>
<rect x="911.00" y="517.00" width="274.00" height="120.00" fill="none" stroke="#1c1c1c" stroke-width="1.74"/>
<rect x="1116.00" y="520.30" width="66.00" height="16.20" fill="rgba(255,255,255,0.8)" stroke="#d0d0d0" stroke-width="1.2" rx="2"/>
<line x1="1118.70" y1="527.80" x2="1139.40" y2="527.80" stroke="#00f" stroke-width="1.74"/>
<text x="1143.20" y="531.20" font-size="10.7" text-anchor="start" textLength="34.75" lengthAdjust="spacingAndGlyphs">y=517</text>
<line x1="904.50" y1="801.00" x2="911.00" y2="801.00" stroke="#1c1c1c" stroke-width="1.74"/>
<text x="895.80" y="805.40" font-size="10" text-anchor="end" textLength="18.56" lengthAdjust="spacingAndGlyphs">175</text>
<line x1="904.50" y1="772.90" x2="911.00" y2="772.90" stroke="#1c1c1c" stroke-width="1.74"/>
<text x="895.80" y="777.30" font-size="10" text-anchor="end" textLength="18.56" lengthAdjust="spacingAndGlyphs">200</text>
<line x1="904.50" y1="744.80" x2="911.00" y2="744.80" stroke="#1c1c1c" stroke-width="1.74"/>
<text x="895.80" y="749.20" font-size="10" text-anchor="end" textLength="18.56" lengthAdjust="spacingAndGlyphs">225</text>
<line x1="904.50" y1="716.70" x2="911.00" y2="716.70" stroke="#1c1c1c" stroke-width="1.74"/>
<text x="895.80" y="721.10" font-size="10" text-anchor="end" textLength="18.56" lengthAdjust="spacingAndGlyphs">250</text>
<line x1="913.00" y1="809.00" x2="913.00" y2="815.50" stroke="#1c1c1c" stroke-width="1.74"/>
<text x="913.00" y="832.20" font-size="10" text-anchor="middle" textLength="6.19" lengthAdjust="spacingAndGlyphs">0</text>
<line x1="965.00" y1="809.00" x2="965.00" y2="815.50" stroke="#1c1c1c" stroke-width="1.74"/>
<text x="965.00" y="832.20" font-size="10" text-anchor="middle" textLength="18.56" lengthAdjust="spacingAndGlyphs">200</text>
<line x1="1017.00" y1="809.00" x2="1017.00" y2="815.50" stroke="#1c1c1c" stroke-width="1.74"/>
<text x="1017.00" y="832.20" font-size="10" text-anchor="middle" textLength="18.56" lengthAdjust="spacingAndGlyphs">400</text>
<line x1="1069.00" y1="809.00" x2="1069.00" y2="815.50" stroke="#1c1c1c" stroke-width="1.74"/>
<text x="1069.00" y="832.20" font-size="10" text-anchor="middle" textLength="18.56" lengthAdjust="spacingAndGlyphs">600</text>
<line x1="1121.00" y1="809.00" x2="1121.00" y2="815.50" stroke="#1c1c1c" stroke-width="1.74"/>
<text x="1121.00" y="832.20" font-size="10" text-anchor="middle" textLength="18.56" lengthAdjust="spacingAndGlyphs">800</text>
<line x1="1173.00" y1="809.00" x2="1173.00" y2="815.50" stroke="#1c1c1c" stroke-width="1.74"/>
<text x="1173.00" y="832.20" font-size="10" text-anchor="middle" textLength="24.75" lengthAdjust="spacingAndGlyphs">1000</text>
<text x="1049.00" y="849.80" font-size="10.7" text-anchor="middle" textLength="6.36" lengthAdjust="spacingAndGlyphs">Y</text>
<text x="866.40" y="751.00" font-size="10.7" text-anchor="middle" textLength="34.77" lengthAdjust="spacingAndGlyphs" transform="rotate(-90 866.40 751.00)">counts</text>
<text x="1194.40" y="749.00" font-size="10.7" text-anchor="middle" textLength="38.66" lengthAdjust="spacingAndGlyphs" transform="rotate(90 1194.40 749.00)">cut in y</text>
<clipPath id="c2"><rect x="911" y="689" width="274" height="120"/></clipPath>
<path d="M912.7,829.1 913.0,749.1 913.2,750.0 913.5,749.3 913.7,756.9 914.0,745.7 914.3,757.5 914.5,759.4 914.8,751.5 915.0,746.2 915.3,749.1 915.6,751.7 915.8,753.2 916.1,752.4 916.3,750.5 916.6,753.4 916.9,748.2 917.1,754.6 917.4,743.4 917.6,754.0 917.9,750.2 918.2,754.4 918.4,754.5 918.7,757.9 918.9,756.4 919.2,746.5 919.5,761.1 919.7,753.1 920.0,740.2 920.2,750.8 920.5,753.2 920.8,750.6 921.0,760.8 921.3,761.8 921.5,750.0 921.8,747.7 922.1,749.8 922.3,748.4 922.6,754.4 922.8,750.9 923.1,741.7 923.4,758.4 923.6,745.9 923.9,755.7 924.1,758.5 924.4,748.0 924.7,756.7 924.9,746.6 925.2,744.1 925.4,747.9 925.7,754.3 926.0,752.1 926.2,748.1 926.5,745.2 926.7,736.3 927.0,761.0 927.3,751.9 927.5,755.5 927.8,756.8 928.0,739.4 928.3,751.4 928.6,743.1 928.8,751.4 929.1,755.1 929.3,746.8 929.6,752.5 929.9,741.9 930.1,751.1 930.4,757.9 930.6,751.9 930.9,742.0 931.2,757.6 931.4,745.9 931.7,749.3 931.9,744.8 932.2,750.3 932.5,752.2 932.7,756.0 933.0,753.7 933.2,751.9 933.5,749.2 933.8,745.8 934.0,750.9 934.3,741.8 934.5,749.7 934.8,755.4 935.1,747.9 935.3,755.1 935.6,746.3 935.8,758.2 936.1,760.3 936.4,750.7 936.6,749.7 936.9,754.5 937.1,746.5 937.4,753.7 937.7,734.6 937.9,744.0 938.2,742.4 938.4,751.1 938.7,749.8 939.0,750.4 939.2,749.0 939.5,759.1 939.7,742.9 940.0,762.6 940.3,757.8 940.5,758.0 940.8,754.5 941.0,746.4 941.3,754.2 941.6,753.9 941.8,757.2 942.1,760.2 942.3,761.8 942.6,746.8 942.9,750.3 943.1,755.0 943.4,746.2 943.6,748.6 943.9,756.8 944.2,754.8 944.4,746.2 944.7,743.4 944.9,753.0 945.2,745.6 945.5,743.9 945.7,744.9 946.0,750.6 946.2,746.9 946.5,746.6 946.8,753.7 947.0,750.0 947.3,752.5 947.5,758.7 947.8,750.8 948.1,752.4 948.3,756.7 948.6,747.3 948.8,744.4 949.1,747.2 949.4,753.8 949.6,757.6 949.9,746.1 950.1,755.5 950.4,744.1 950.7,753.6 950.9,749.0 951.2,752.6 951.4,750.4 951.7,745.4 952.0,747.8 952.2,756.1 952.5,742.1 952.7,745.8 953.0,748.9 953.3,756.5 953.5,755.0 953.8,756.0 954.0,755.7 954.3,746.7 954.6,751.5 954.8,752.9 955.1,750.7 955.3,750.0 955.6,757.7 955.9,747.9 956.1,751.2 956.4,755.0 956.6,751.7 956.9,761.9 957.2,744.4 957.4,750.3 957.7,747.7 957.9,754.3 958.2,748.1 958.5,749.5 958.7,759.5 959.0,751.5 959.2,739.9 959.5,750.5 959.8,748.6 960.0,747.1 960.3,744.2 960.5,749.4 960.8,759.5 961.1,747.7 961.3,745.9 961.6,747.3 961.8,757.9 962.1,750.3 962.4,753.9 962.6,749.5 962.9,753.9 963.1,744.3 963.4,749.4 963.7,755.5 963.9,757.0 964.2,754.2 964.4,750.3 964.7,756.5 965.0,753.2 965.2,746.3 965.5,750.6 965.7,757.5 966.0,744.6 966.3,735.4 966.5,753.3 966.8,755.4 967.0,752.8 967.3,744.3 967.6,758.5 967.8,746.5 968.1,751.7 968.3,743.1 968.6,750.8 968.9,753.2 969.1,753.9 969.4,747.9 969.6,752.1 969.9,755.4 970.2,762.6 970.4,749.4 970.7,754.3 970.9,739.9 971.2,752.0 971.5,740.6 971.7,750.9 972.0,746.9 972.2,751.9 972.5,749.7 972.8,746.6 973.0,754.1 973.3,750.1 973.5,741.9 973.8,756.7 974.1,753.0 974.3,747.0 974.6,748.1 974.8,747.8 975.1,751.4 975.4,745.8 975.6,751.2 975.9,752.5 976.1,760.2 976.4,754.3 976.7,750.2 976.9,742.7 977.2,751.7 977.4,738.8 977.7,756.0 978.0,750.7 978.2,744.7 978.5,753.8 978.7,753.3 979.0,748.2 979.3,746.9 979.5,747.6 979.8,739.5 980.0,748.9 980.3,742.0 980.6,757.1 980.8,755.9 981.1,750.1 981.3,751.4 981.6,747.7 981.9,751.8 982.1,745.9 982.4,754.3 982.6,750.7 982.9,757.2 983.2,751.7 983.4,746.0 983.7,744.9 983.9,742.8 984.2,755.9 984.5,754.7 984.7,751.7 985.0,751.5 985.2,754.7 985.5,748.0 985.8,754.3 986.0,747.3 986.3,741.5 986.5,749.5 986.8,746.2 987.1,752.5 987.3,755.9 987.6,760.5 987.8,742.9 988.1,738.9 988.4,763.5 988.6,755.8 988.9,752.6 989.1,755.5 989.4,753.7 989.7,746.3 989.9,751.6 990.2,746.1 990.4,759.4 990.7,752.4 991.0,741.0 991.2,754.2 991.5,760.0 991.7,753.7 992.0,751.0 992.3,764.6 992.5,749.1 992.8,746.5 993.0,753.4 993.3,751.5 993.6,751.7 993.8,752.0 994.1,757.9 994.3,754.1 994.6,747.8 994.9,747.0 995.1,748.6 995.4,756.0 995.6,748.1 995.9,745.7 996.2,743.5 996.4,747.1 996.7,750.4 996.9,751.4 997.2,747.2 997.5,745.3 997.7,763.4 998.0,755.6 998.2,749.7 998.5,745.4 998.8,758.5 999.0,758.1 999.3,761.0 999.5,743.9 999.8,747.3 1000.1,752.3 1000.3,736.1 1000.6,739.9 1000.8,746.0 1001.1,749.0 1001.4,751.6 1001.6,745.6 1001.9,755.1 1002.1,745.5 1002.4,754.4 1002.7,745.8 1002.9,751.3 1003.2,747.8 1003.4,743.2 1003.7,746.4 1004.0,751.3 1004.2,752.3 1004.5,754.7 1004.7,756.0 1005.0,745.0 1005.3,749.7 1005.5,757.1 1005.8,743.1 1006.0,754.0 1006.3,742.9 1006.6,748.8 1006.8,746.4 1007.1,749.5 1007.3,756.1 1007.6,751.7 1007.9,752.7 1008.1,755.7 1008.4,747.8 1008.6,757.0 1008.9,756.8 1009.2,754.6 1009.4,757.3 1009.7,750.4 1009.9,747.1 1010.2,750.2 1010.5,751.8 1010.7,746.5 1011.0,747.2 1011.2,742.2 1011.5,753.3 1011.8,749.0 1012.0,752.1 1012.3,753.1 1012.5,751.3 1012.8,746.6 1013.1,753.0 1013.3,756.1 1013.6,741.3 1013.8,749.3 1014.1,748.2 1014.4,746.1 1014.6,744.0 1014.9,745.5 1015.1,754.0 1015.4,751.5 1015.7,744.3 1015.9,750.1 1016.2,743.2 1016.4,742.4 1016.7,756.2 1017.0,750.4 1017.2,754.9 1017.5,753.8 1017.7,751.4 1018.0,749.2 1018.3,747.7 1018.5,756.6 1018.8,750.2 1019.0,751.7 1019.3,754.8 1019.6,748.9 1019.8,758.3 1020.1,751.1 1020.3,750.1 1020.6,740.5 1020.9,750.4 1021.1,751.7 1021.4,744.7 1021.6,755.7 1021.9,751.0 1022.2,737.8 1022.4,742.5 1022.7,747.6 1022.9,744.1 1023.2,756.8 1023.5,744.0 1023.7,752.9 1024.0,748.0 1024.2,750.4 1024.5,747.8 1024.8,752.7 1025.0,759.9 1025.3,763.3 1025.5,760.3 1025.8,749.3 1026.1,753.9 1026.3,759.3 1026.6,742.9 1026.8,749.2 1027.1,754.6 1027.4,756.6 1027.6,746.0 1027.9,750.6 1028.1,757.0 1028.4,750.4 1028.7,759.4 1028.9,741.8 1029.2,751.4 1029.4,749.3 1029.7,755.0 1030.0,756.4 1030.2,751.2 1030.5,755.3 1030.7,759.9 1031.0,746.9 1031.3,751.7 1031.5,757.5 1031.8,748.0 1032.0,751.4 1032.3,752.5 1032.6,759.5 1032.8,750.4 1033.1,762.4 1033.3,756.4 1033.6,743.2 1033.9,748.1 1034.1,758.2 1034.4,755.3 1034.6,749.5 1034.9,745.4 1035.2,750.7 1035.4,750.3 1035.7,745.7 1035.9,742.9 1036.2,757.7 1036.5,752.3 1036.7,744.3 1037.0,746.9 1037.2,756.6 1037.5,761.3 1037.8,742.9 1038.0,751.2 1038.3,749.2 1038.5,752.2 1038.8,744.8 1039.1,744.1 1039.3,742.2 1039.6,756.9 1039.8,751.5 1040.1,745.4 1040.4,750.7 1040.6,749.9 1040.9,740.7 1041.1,749.2 1041.4,757.1 1041.7,739.2 1041.9,745.2 1042.2,748.4 1042.4,746.3 1042.7,745.7 1043.0,749.0 1043.2,744.8 1043.5,749.7 1043.7,745.0 1044.0,736.4 1044.3,750.2 1044.5,762.4 1044.8,740.1 1045.0,746.2 1045.3,752.5 1045.6,746.5 1045.8,757.3 1046.1,743.8 1046.3,761.0 1046.6,745.5 1046.9,741.1 1047.1,751.1 1047.4,746.0 1047.6,746.1 1047.9,758.4 1048.2,750.7 1048.4,739.2 1048.7,748.1 1048.9,735.9 1049.2,748.0 1049.5,750.5 1049.7,749.7 1050.0,752.0 1050.2,760.7 1050.5,749.1 1050.8,740.7 1051.0,753.3 1051.3,753.5 1051.5,751.7 1051.8,741.9 1052.1,741.7 1052.3,751.3 1052.6,744.3 1052.8,741.5 1053.1,747.9 1053.4,750.1 1053.6,743.7 1053.9,752.7 1054.1,746.9 1054.4,743.9 1054.7,738.2 1054.9,742.5 1055.2,745.3 1055.4,753.0 1055.7,743.7 1056.0,748.1 1056.2,737.1 1056.5,747.5 1056.7,747.5 1057.0,751.3 1057.3,748.7 1057.5,745.6 1057.8,754.2 1058.0,750.1 1058.3,755.0 1058.6,755.7 1058.8,744.8 1059.1,751.9 1059.3,750.5 1059.6,746.2 1059.9,752.5 1060.1,750.5 1060.4,749.3 1060.6,752.2 1060.9,752.9 1061.2,741.5 1061.4,745.3 1061.7,744.4 1061.9,755.5 1062.2,750.7 1062.5,743.6 1062.7,743.7 1063.0,753.2 1063.2,746.1 1063.5,739.9 1063.8,744.2 1064.0,749.1 1064.3,751.7 1064.5,758.0 1064.8,750.1 1065.1,747.8 1065.3,748.5 1065.6,749.4 1065.8,744.1 1066.1,741.8 1066.4,754.1 1066.6,747.7 1066.9,748.6 1067.1,747.8 1067.4,750.8 1067.7,745.2 1067.9,742.0 1068.2,751.1 1068.4,750.4 1068.7,741.8 1069.0,754.7 1069.2,744.7 1069.5,748.4 1069.7,753.0 1070.0,746.8 1070.3,749.8 1070.5,746.2 1070.8,745.3 1071.0,749.4 1071.3,746.7 1071.6,747.4 1071.8,744.8 1072.1,758.7 1072.3,749.3 1072.6,744.5 1072.9,748.9 1073.1,741.9 1073.4,751.1 1073.6,750.6 1073.9,748.3 1074.2,756.9 1074.4,735.7 1074.7,753.5 1074.9,748.1 1075.2,761.1 1075.5,746.7 1075.7,753.2 1076.0,743.9 1076.2,747.1 1076.5,739.9 1076.8,750.5 1077.0,746.9 1077.3,749.5 1077.5,746.7 1077.8,752.2 1078.1,749.4 1078.3,741.9 1078.6,743.3 1078.8,755.4 1079.1,747.1 1079.4,747.8 1079.6,754.9 1079.9,744.7 1080.1,753.0 1080.4,745.9 1080.7,742.4 1080.9,751.7 1081.2,744.5 1081.4,743.2 1081.7,751.4 1082.0,744.9 1082.2,739.0 1082.5,741.4 1082.7,752.5 1083.0,762.0 1083.3,750.2 1083.5,753.9 1083.8,740.9 1084.0,751.4 1084.3,738.9 1084.6,755.5 1084.8,751.6 1085.1,747.3 1085.3,754.2 1085.6,738.1 1085.9,752.6 1086.1,745.0 1086.4,746.0 1086.6,738.2 1086.9,736.4 1087.2,747.6 1087.4,745.7 1087.7,744.4 1087.9,748.7 1088.2,741.9 1088.5,755.8 1088.7,752.3 1089.0,756.1 1089.2,746.8 1089.5,740.2 1089.8,745.8 1090.0,749.6 1090.3,748.8 1090.5,740.3 1090.8,749.2 1091.1,751.5 1091.3,747.2 1091.6,758.6 1091.8,749.1 1092.1,748.5 1092.4,750.0 1092.6,752.7 1092.9,736.1 1093.1,741.6 1093.4,742.8 1093.7,742.0 1093.9,754.0 1094.2,748.8 1094.4,748.9 1094.7,748.6 1095.0,743.7 1095.2,748.2 1095.5,739.5 1095.7,748.2 1096.0,746.8 1096.3,742.2 1096.5,745.8 1096.8,754.2 1097.0,744.7 1097.3,751.8 1097.6,738.5 1097.8,736.9 1098.1,752.9 1098.3,742.6 1098.6,749.7 1098.9,758.6 1099.1,744.0 1099.4,741.8 1099.6,737.3 1099.9,745.8 1100.2,752.1 1100.4,740.8 1100.7,747.6 1100.9,746.5 1101.2,744.3 1101.5,752.0 1101.7,743.9 1102.0,748.0 1102.2,756.4 1102.5,744.4 1102.8,756.9 1103.0,751.9 1103.3,744.7 1103.5,752.7 1103.8,743.0 1104.1,755.0 1104.3,746.9 1104.6,743.2 1104.8,750.4 1105.1,751.1 1105.4,749.1 1105.6,754.4 1105.9,750.9 1106.1,750.5 1106.4,753.2 1106.7,744.3 1106.9,743.7 1107.2,748.3 1107.4,744.1 1107.7,739.9 1108.0,751.7 1108.2,735.2 1108.5,752.5 1108.7,748.4 1109.0,743.0 1109.3,753.5 1109.5,747.6 1109.8,749.8 1110.0,746.6 1110.3,737.8 1110.6,752.9 1110.8,752.5 1111.1,750.5 1111.3,753.5 1111.6,751.7 1111.9,754.3 1112.1,741.5 1112.4,747.9 1112.6,742.4 1112.9,743.5 1113.2,755.6 1113.4,746.2 1113.7,742.9 1113.9,751.0 1114.2,748.1 1114.5,748.2 1114.7,755.5 1115.0,751.0 1115.2,743.9 1115.5,746.3 1115.8,744.3 1116.0,754.1 1116.3,750.8 1116.5,742.3 1116.8,756.2 1117.1,748.6 1117.3,755.1 1117.6,747.2 1117.8,741.7 1118.1,740.0 1118.4,753.7 1118.6,748.1 1118.9,759.4 1119.1,745.5 1119.4,751.4 1119.7,735.1 1119.9,756.0 1120.2,753.9 1120.4,751.7 1120.7,742.7 1121.0,756.5 1121.2,742.6 1121.5,751.5 1121.7,743.6 1122.0,752.1 1122.3,753.9 1122.5,745.5 1122.8,748.8 1123.0,748.5 1123.3,746.3 1123.6,736.9 1123.8,736.2 1124.1,745.2 1124.3,742.1 1124.6,750.5 1124.9,738.5 1125.1,755.6 1125.4,755.0 1125.6,741.2 1125.9,746.2 1126.2,742.3 1126.4,745.5 1126.7,743.5 1126.9,739.8 1127.2,748.9 1127.5,748.9 1127.7,745.5 1128.0,739.7 1128.2,758.1 1128.5,745.9 1128.8,747.9 1129.0,746.5 1129.3,752.3 1129.5,745.5 1129.8,741.6 1130.1,752.2 1130.3,735.6 1130.6,744.6 1130.8,743.4 1131.1,743.2 1131.4,740.0 1131.6,754.2 1131.9,747.4 1132.1,741.7 1132.4,752.2 1132.7,758.9 1132.9,748.5 1133.2,758.0 1133.4,754.0 1133.7,753.3 1134.0,754.8 1134.2,750.4 1134.5,748.2 1134.7,757.7 1135.0,753.5 1135.3,747.4 1135.5,761.8 1135.8,748.1 1136.0,736.6 1136.3,747.3 1136.6,746.9 1136.8,744.0 1137.1,746.8 1137.3,746.2 1137.6,738.0 1137.9,759.1 1138.1,748.4 1138.4,749.8 1138.6,745.3 1138.9,748.6 1139.2,744.2 1139.4,746.2 1139.7,760.9 1139.9,754.6 1140.2,749.7 1140.5,755.7 1140.7,751.1 1141.0,742.6 1141.2,756.9 1141.5,754.0 1141.8,745.5 1142.0,751.0 1142.3,747.0 1142.5,738.4 1142.8,743.0 1143.1,751.0 1143.3,746.5 1143.6,746.5 1143.8,747.4 1144.1,754.3 1144.4,744.6 1144.6,739.5 1144.9,752.4 1145.1,753.9 1145.4,743.5 1145.7,744.4 1145.9,747.3 1146.2,754.7 1146.4,744.9 1146.7,753.2 1147.0,759.1 1147.2,751.3 1147.5,743.4 1147.7,744.8 1148.0,744.2 1148.3,743.9 1148.5,738.0 1148.8,754.8 1149.0,754.6 1149.3,741.8 1149.6,745.2 1149.8,750.0 1150.1,751.0 1150.3,749.3 1150.6,748.1 1150.9,752.3 1151.1,753.8 1151.4,748.7 1151.6,749.0 1151.9,752.8 1152.2,749.2 1152.4,745.7 1152.7,731.2 1152.9,756.4 1153.2,749.0 1153.5,759.5 1153.7,747.3 1154.0,744.4 1154.2,742.2 1154.5,748.8 1154.8,751.0 1155.0,743.7 1155.3,742.6 1155.5,758.8 1155.8,750.3 1156.1,750.3 1156.3,750.9 1156.6,752.8 1156.8,738.4 1157.1,745.2 1157.4,743.6 1157.6,751.0 1157.9,740.8 1158.1,748.4 1158.4,750.9 1158.7,758.0 1158.9,743.3 1159.2,753.9 1159.4,757.0 1159.7,743.6 1160.0,753.2 1160.2,748.5 1160.5,742.9 1160.7,759.7 1161.0,749.8 1161.3,749.5 1161.5,738.0 1161.8,747.9 1162.0,743.6 1162.3,742.4 1162.6,745.8 1162.8,745.6 1163.1,753.2 1163.3,749.5 1163.6,749.4 1163.9,750.4 1164.1,741.4 1164.4,743.2 1164.6,747.3 1164.9,746.7 1165.2,750.1 1165.4,745.9 1165.7,755.5 1165.9,747.3 1166.2,744.2 1166.5,751.3 1166.7,754.1 1167.0,753.5 1167.2,739.3 1167.5,760.1 1167.8,751.4 1168.0,751.1 1168.3,742.7 1168.5,745.3 1168.8,751.9 1169.1,746.8 1169.3,757.5 1169.6,751.9 1169.8,754.1 1170.1,745.4 1170.4,750.3 1170.6,736.8 1170.9,750.6 1171.1,748.0 1171.4,747.4 1171.7,735.8 1171.9,747.7 1172.2,757.4 1172.4,759.4 1172.7,745.1 1173.0,743.7 1173.2,750.4 1173.5,745.6 1173.7,742.8 1174.0,737.7 1174.3,753.5 1174.5,748.1 1174.8,755.1 1175.0,743.0 1175.3,749.4 1175.6,753.1 1175.8,743.8 1176.1,744.7 1176.3,748.8 1176.6,744.4 1176.9,759.7 1177.1,755.0 1177.4,749.3 1177.6,748.6 1177.9,739.3 1178.2,737.6 1178.4,742.3 1178.7,748.5 1178.9,752.0 1179.2,746.5 1179.5,752.9 1179.7,758.8 1180.0,755.3 1180.2,752.2 1180.5,736.6 1180.8,746.9 1181.0,749.3 1181.3,748.2" fill="none" stroke="#00f" stroke-width="1.74" clip-path="url(#c2)" stroke-linejoin="round"/>
<rect x="911.00" y="689.00" width="274.00" height="120.00" fill="none" stroke="#1c1c1c" stroke-width="1.74"/>
<rect x="1108.70" y="692.00" width="73.20" height="16.00" fill="rgba(255,255,255,0.8)" stroke="#d0d0d0" stroke-width="1.2" rx="2"/>
<line x1="1111.40" y1="699.90" x2="1133.80" y2="699.90" stroke="#00f" stroke-width="1.74"/>
<text x="1136.80" y="703.00" font-size="10.7" text-anchor="start" textLength="41.38" lengthAdjust="spacingAndGlyphs">x=1024</text>
</svg>
<script>
(function(){
var c=document.getElementById('img'); var ctx=c.getContext('2d');
var W=c.width,H=c.height; var im=ctx.createImageData(W,H); var d=im.data;
var s=0x9E3779B9>>>0;
function rnd(){ s^=s<<13; s>>>=0; s^=s>>>17; s^=s<<5; s>>>=0; return s/4294967296; }
function gauss(){ var u=rnd()||1e-9, v=rnd(); return Math.sqrt(-2*Math.log(u))*Math.cos(6.283185307*v); }
var lo=212.18, hi=229.82;
function sm(x){ if(x<=0) return 0; if(x>=1) return 1; return x*x*(3-2*x); }
function band(u,a,b){ var w=0.06; return sm((u-a+w)/w)*sm((b+w-u)/w); }
for(var y=0;y<H;y++){
  var vv=1-(y+0.5)/H;
  for(var x=0;x<W;x++){
    var u=(x+0.5)/W;
    var m=221.0+3.0*(vv-0.5);
    m+= 3.0*sm((u-0.7)/0.3)*sm((vv-0.8)/0.2);
    m+= 1.0*sm((u-0.82)/0.18)*sm((vv-0.45)/0.55);
    m-= 0.8*sm((0.10-vv)/0.10);
    m-= 1.5*sm((0.3-u)/0.3)*sm((0.25-vv)/0.25);
    m-= 2.2*sm((u-0.72)/0.28)*sm((0.38-vv)/0.38);
    m-= 1.0*sm((0.3-u)/0.3)*sm((vv-0.5)/0.3);
    m+= 0.8*band(u,0.24,0.48)*sm((vv-0.45)/0.3);
    m+= 1.2*sm((vv-0.95)/0.05);
    var val=m+4.6*gauss();
    var t=(val-lo)/(hi-lo); if(t<0)t=0; if(t>1)t=1;
    var r=t<0.365079? 0.0416+(1-0.0416)*t/0.365079 : 1;
    var g=t<0.365079? 0 : (t<0.746032? (t-0.365079)/(0.746032-0.365079) : 1);
    var b=t<0.746032? 0 : (t-0.746032)/(1-0.746032);
    var k=(y*W+x)*4; d[k]=r*255; d[k+1]=g*255; d[k+2]=b*255; d[k+3]=255;
  }
}
// white defect lines
function setpx(x,y,rr,gg,bb){ if(x<0||y<0||x>=W||y>=H) return; var k=(y*W+x)*4; d[k]=rr; d[k+1]=gg; d[k+2]=bb; }
for(var y=0;y<192;y++){ setpx(455,y,255,255,235); }
for(var x=0;x<139;x++){ setpx(x,201,255,255,235); }
ctx.putImageData(im,0,0);
})();
</script>
</body></html>
